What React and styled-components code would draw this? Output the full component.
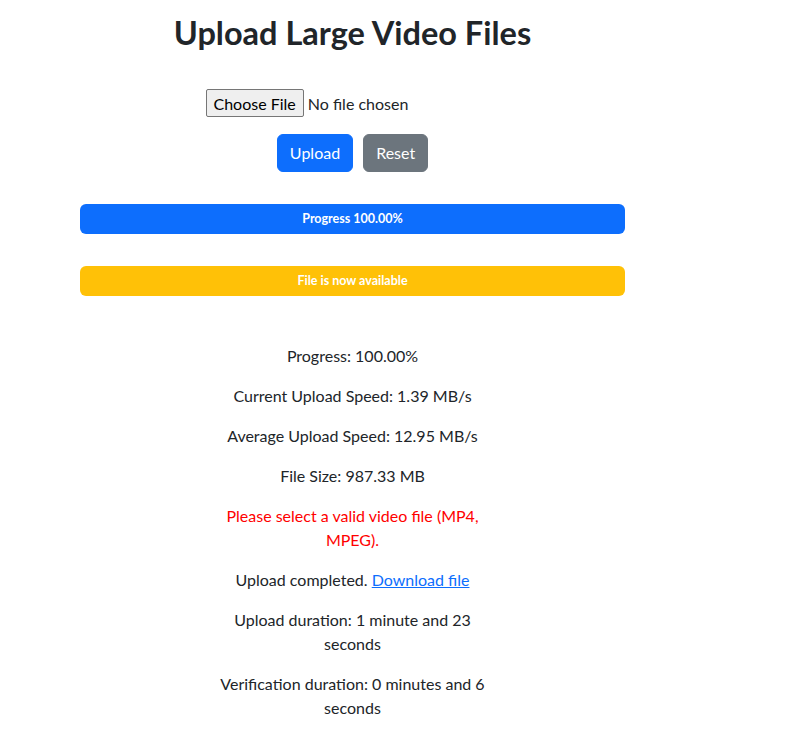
import React from "react";
import styled, { createGlobalStyle } from "styled-components";

const GlobalStyle = createGlobalStyle`
  body {
    margin: 0;
    font-family: Lato, "Noto Sans", sans-serif;
    font-size: 16px;
    line-height: 1.5;
    color: #212529;
    background: #fff;
  }
`;

const Page = styled.div`
  width: 545px;
  margin-left: 80px;
  padding-top: 13px;
  display: flex;
  flex-direction: column;
  align-items: center;
`;

const Title = styled.h1`
  margin: 0;
  font-size: 32.5px;
  font-weight: 700;
  line-height: 40px;
  color: #212529;
`;

const FileRow = styled.div`
  margin-top: 36px;
  height: 28px;
  display: flex;
  justify-content: center;
`;

const FileInput = styled.input`
  width: 294px;
  height: 28px;
  font-family: Lato, "Noto Sans", sans-serif;
  font-size: 16px;
  color: #212529;

  &::file-selector-button {
    height: 28px;
    margin-right: 4px;
    padding: 0 7px;
    border: 1px solid #767676;
    border-radius: 2px;
    background: #efefef;
    color: #000;
    font-family: inherit;
    font-size: 16px;
  }
`;

const ButtonRow = styled.div`
  margin-top: 17px;
  display: flex;
  gap: 10px;
`;

const Button = styled.button`
  height: 38px;
  padding: 6px 12px;
  border: 1px solid ${(p) => p.bg};
  border-radius: 6px;
  background: ${(p) => p.bg};
  color: #fff;
  font-family: Lato, "Noto Sans", sans-serif;
  font-size: 16px;
  line-height: 24px;
  cursor: pointer;
`;

const Bar = styled.div`
  align-self: stretch;
  margin-top: ${(p) => p.gap}px;
  height: 30px;
  border-radius: 6px;
  background: ${(p) => p.bg};
  color: #fff;
  font-size: 12.5px;
  font-weight: 700;
  display: flex;
  align-items: center;
  justify-content: center;
`;

const Info = styled.div`
  margin-top: 48px;
  width: 272px;
  text-align: center;
`;

const Line = styled.p`
  margin: 0 0 16px;
  color: ${(p) => (p.error ? "#ff0000" : "#212529")};
`;

const DownloadLink = styled.a`
  color: #0d6efd;
  text-decoration: underline;
`;

export default function App() {
  return (
    <>
      <GlobalStyle />
      <Page>
        <Title>Upload Large Video Files</Title>
        <FileRow>
          <FileInput type="file" accept="video/mp4,video/mpeg" />
        </FileRow>
        <ButtonRow>
          <Button bg="#0d6efd">Upload</Button>
          <Button bg="#6c757d">Reset</Button>
        </ButtonRow>
        <Bar gap={32} bg="#0d6efd">Progress 100.00%</Bar>
        <Bar gap={32} bg="#ffc107">File is now available</Bar>
        <Info>
          <Line>Progress: 100.00%</Line>
          <Line>Current Upload Speed: 1.39 MB/s</Line>
          <Line>Average Upload Speed: 12.95 MB/s</Line>
          <Line>File Size: 987.33 MB</Line>
          <Line error>Please select a valid video file (MP4, MPEG).</Line>
          <Line>
            Upload completed. <DownloadLink href="#">Download file</DownloadLink>
          </Line>
          <Line>Upload duration: 1 minute and 23 seconds</Line>
          <Line>Verification duration: 0 minutes and 6 seconds</Line>
        </Info>
      </Page>
    </>
  );
}
